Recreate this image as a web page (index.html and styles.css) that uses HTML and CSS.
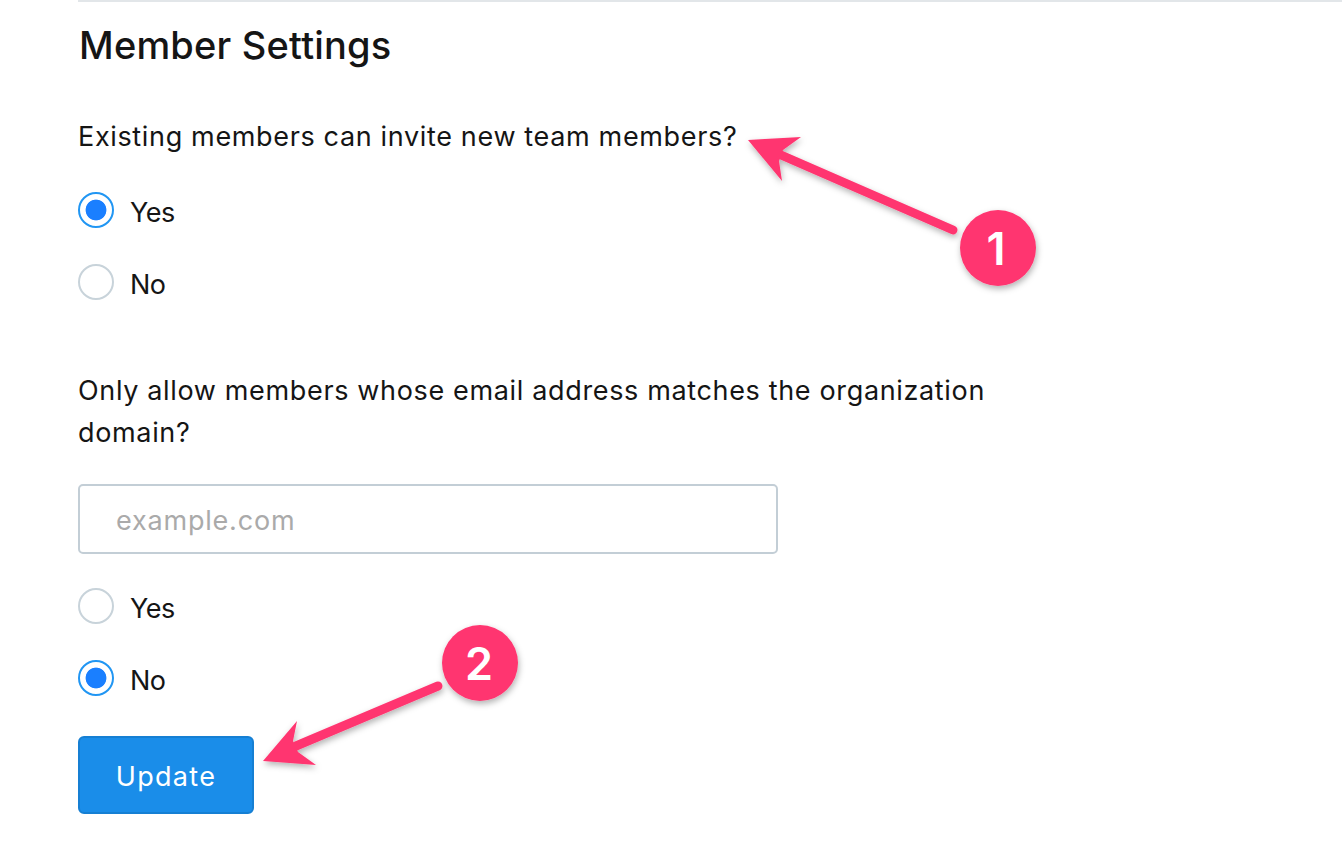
FILE: index.html
```html
<!DOCTYPE html>
<html lang="en">
<head>
    <meta charset="UTF-8">
    <meta name="viewport" content="width=device-width, initial-scale=1.0">
    <title>Member Settings</title>
    <link rel="stylesheet" href="styles.css">
</head>
<body>
    <div class="settings">
        <h2>Member Settings</h2>

        <form class="settings-form">
            <p class="question">Existing members can invite new team members?</p>
            <div class="radio-group">
                <label class="radio-row"><input type="radio" name="invite" checked> Yes</label>
                <label class="radio-row"><input type="radio" name="invite"> No</label>
            </div>

            <p class="question question-wrap">Only allow members whose email address matches the organization domain?</p>
            <input type="text" class="domain-input" placeholder="example.com">
            <div class="radio-group">
                <label class="radio-row"><input type="radio" name="domain"> Yes</label>
                <label class="radio-row"><input type="radio" name="domain" checked> No</label>
            </div>

            <button type="button" class="update-btn">Update</button>
        </form>
    </div>

    <!-- annotations drawn over the page -->
    <svg class="annotations" width="1342" height="858" viewBox="0 0 1342 858">
        <defs>
            <filter id="soft" x="-20%" y="-20%" width="140%" height="140%">
                <feDropShadow dx="1" dy="3" stdDeviation="3" flood-color="#000" flood-opacity="0.3"/>
            </filter>
        </defs>
        <g filter="url(#soft)">
            <path class="arrow-line" d="M953 230 L781 155"/>
            <path class="arrow-head" d="M748 140 L801 137 L783 150 L779 161 L782 181 Z"/>
            <circle class="badge" cx="998" cy="248" r="38"/>
        </g>
        <g filter="url(#soft)">
            <path class="arrow-line" d="M438 686 L296 746"/>
            <path class="arrow-head" d="M263 761 L297 721 L293 741 L298 752 L316 765 Z"/>
            <circle class="badge" cx="480" cy="663" r="38"/>
        </g>
        <text class="badge-num" x="996" y="265">1</text>
        <text class="badge-num" x="479" y="680">2</text>
    </svg>
</body>
</html>
```

FILE: styles.css
```css
body {
    font-family: "Inter", "Liberation Sans", sans-serif;
    background: #fff;
    color: #151515;
    margin: 0;
    padding: 0 0 0 78px;
    height: 858px;
    box-sizing: border-box;
    overflow: hidden;
}

.settings {
    border-top: 2px solid #e2e6e9;
}

.settings h2 {
    font-size: 38px;
    font-weight: 500;
    letter-spacing: 0.2px;
    line-height: 48px;
    margin: 19px 0 0 1px;
}

.settings-form {
    margin-top: 47px;
}

.question {
    font-size: 27px;
    letter-spacing: 0.65px;
    line-height: 42px;
    margin: 0;
    max-width: 930px;
}

.question-wrap {
    margin-top: 68px;
}

.radio-group {
    display: flex;
    flex-direction: column;
    gap: 36px;
    margin-top: 36px;
}

.radio-row {
    display: flex;
    align-items: center;
    gap: 16px;
    height: 36px;
    font-size: 27px;
    letter-spacing: -0.5px;
}

.radio-row input {
    appearance: none;
    width: 36px;
    height: 36px;
    margin: -4px 0 0 0;
    border: 2px solid #c8d3da;
    border-radius: 50%;
    background: #fff;
    box-sizing: border-box;
}

.radio-row input:checked {
    border-color: #2196f3;
    background: radial-gradient(circle, #1a7fff 0, #1a7fff 10px, #fff 10.8px);
}

.domain-input {
    display: block;
    width: 700px;
    height: 70px;
    margin-top: 30px;
    padding: 3px 36px 0;
    border: 2px solid #c3ced6;
    border-radius: 5px;
    font-family: inherit;
    font-size: 27px;
    letter-spacing: 0.8px;
    box-sizing: border-box;
    outline: none;
}

.domain-input::placeholder {
    color: #aaaaaa;
}

.domain-input + .radio-group {
    margin-top: 36px;
}

.update-btn {
    display: block;
    width: 176px;
    height: 78px;
    margin-top: 38px;
    padding: 2px 0 0 0;
    background: #1a8de9;
    color: white;
    border: 2px solid #167fd3;
    border-radius: 6px;
    font-family: inherit;
    font-size: 27px;
    letter-spacing: 1.3px;
    box-sizing: border-box;
}

.annotations {
    position: absolute;
    top: 0;
    left: 0;
}

.arrow-line {
    fill: none;
    stroke: #ff3670;
    stroke-width: 9;
    stroke-linecap: round;
}

.arrow-head {
    fill: #ff3670;
}

.badge {
    fill: #ff3670;
}

.badge-num {
    font-family: "Inter", sans-serif;
    font-size: 45px;
    font-weight: 600;
    fill: #fff;
    text-anchor: middle;
}
```
